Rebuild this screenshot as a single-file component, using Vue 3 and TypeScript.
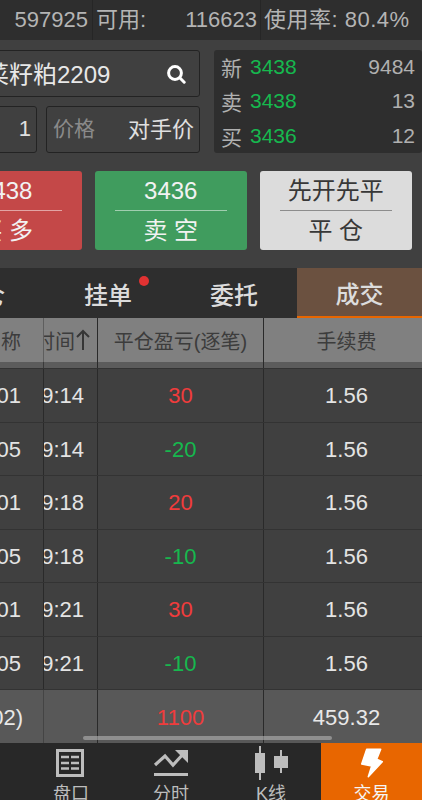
<script setup lang="ts">
type Trade = { name: string; time: string; pl: number }

const trades: Trade[] = [
  { name: '01', time: '9:14', pl: 30 },
  { name: '05', time: '9:14', pl: -20 },
  { name: '01', time: '9:18', pl: 20 },
  { name: '05', time: '9:18', pl: -10 },
  { name: '01', time: '9:21', pl: 30 },
  { name: '05', time: '9:21', pl: -10 },
]

const quotes = [
  { label: '新', price: 3438, vol: 9484 },
  { label: '卖', price: 3438, vol: 13 },
  { label: '买', price: 3436, vol: 12 },
]
</script>

<template>
  <div class="page">
    <div class="summary">
      <div class="sum-cell sum-first">597925</div>
      <div class="sum-cell sum-second">
        <span>可用:</span>
        <span>116623</span>
      </div>
      <div class="sum-cell sum-third">使用率: 80.4%</div>
    </div>

    <div class="order">
      <div class="form">
        <div class="box search">
          <span class="contract">菜籽粕2209</span>
          <svg class="search-icon" width="20" height="20" viewBox="0 0 20 20">
            <circle cx="9" cy="9" r="6.4" fill="none" stroke="#fff" stroke-width="3" />
            <path d="M14 14 L18.2 18.2" stroke="#fff" stroke-width="3" stroke-linecap="round" />
          </svg>
        </div>
        <div class="form-row">
          <div class="box qty">1</div>
          <div class="box price">
            <span class="price-label">价格</span>
            <span class="price-value">对手价</span>
          </div>
        </div>
      </div>
      <div class="quotes">
        <div v-for="q in quotes" :key="q.label" class="quote">
          <span class="quote-label">{{ q.label }}</span>
          <span class="quote-price">{{ q.price }}</span>
          <span class="quote-vol">{{ q.vol }}</span>
        </div>
      </div>
    </div>

    <div class="actions">
      <div class="action action-buy">
        <div class="action-top">3438</div>
        <div class="action-bottom">买 多</div>
      </div>
      <div class="action action-sell">
        <div class="action-top">3436</div>
        <div class="action-bottom">卖 空</div>
      </div>
      <div class="action action-close">
        <div class="action-top">先开先平</div>
        <div class="action-bottom">平 仓</div>
      </div>
    </div>

    <div class="tabs">
      <div class="tab tab-first"><span>持仓</span></div>
      <div class="tab tab-wide">
        <span class="dot-wrap">挂单<i class="dot"></i></span>
      </div>
      <div class="tab tab-wide">委托</div>
      <div class="tab tab-active">成交</div>
    </div>

    <div class="table">
      <div class="row head">
        <div class="cell col-name">名称</div>
        <div class="cell col-time">
          <span>时间</span>
          <svg class="sort-arrow" width="14" height="22" viewBox="0 0 14 22">
            <path d="M7 21V2M1 8L7 2L13 8" fill="none" stroke="#363636" stroke-width="2" />
          </svg>
        </div>
        <div class="cell col-pl">平仓盈亏(逐笔)</div>
        <div class="cell col-fee">手续费</div>
      </div>
      <div class="head-band">
        <div class="col-name"></div>
        <div class="col-time"></div>
        <div class="col-pl"></div>
        <div class="col-fee"></div>
      </div>
      <div v-for="(t, i) in trades" :key="i" class="row body">
        <div class="cell col-name">{{ t.name }}</div>
        <div class="cell col-time">{{ t.time }}</div>
        <div class="cell col-pl" :class="t.pl > 0 ? 'up' : 'down'">{{ t.pl }}</div>
        <div class="cell col-fee">1.56</div>
      </div>
      <div class="row total">
        <div class="cell col-name">02)</div>
        <div class="cell col-time"></div>
        <div class="cell col-pl up">1100</div>
        <div class="cell col-fee">459.32</div>
      </div>
      <div class="scrollbar"></div>
    </div>

    <div class="nav">
      <div class="nav-item">
        <svg width="36" height="36" viewBox="0 0 36 36">
          <rect x="4.5" y="5.5" width="25" height="25" fill="none" stroke="#bdbdbd" stroke-width="3" />
          <path d="M8 12H16M18 12H26M8 18H16M18 18H26M8 23.5H16M18 23.5H26" stroke="#bdbdbd" stroke-width="2.4" />
        </svg>
        <span>盘口</span>
      </div>
      <div class="nav-item">
        <svg width="36" height="36" viewBox="0 0 36 36">
          <path d="M2 20 L12 11 L20 20 L32 7" fill="none" stroke="#bdbdbd" stroke-width="3.2" />
          <path d="M22 5 H35 V18 Z" fill="#bdbdbd" />
          <rect x="1" y="28" width="34" height="3" fill="#bdbdbd" />
        </svg>
        <span>分时</span>
      </div>
      <div class="nav-item">
        <svg width="36" height="36" viewBox="0 0 36 36">
          <rect x="2" y="8" width="10" height="20" fill="#bdbdbd" />
          <rect x="6" y="1" width="2" height="34" fill="#bdbdbd" />
          <rect x="21" y="11" width="14" height="12" fill="#bdbdbd" />
          <rect x="27" y="5" width="2" height="23" fill="#bdbdbd" />
        </svg>
        <span>K线</span>
      </div>
      <div class="nav-item nav-active">
        <svg width="36" height="36" viewBox="0 0 36 36">
          <path
            d="M12.7 4.3 H26.7 L22.7 14.3 L28.3 16.7 L14.3 31.7 L17.7 21 L7.7 19 Z"
            fill="#fff"
            stroke="#fff"
            stroke-width="1.5"
            stroke-linejoin="round"
          />
        </svg>
        <span>交易</span>
      </div>
    </div>
  </div>
</template>

<style>
html,
body {
  margin: 0;
  background: #282828;
}
</style>

<style scoped>
.page {
  width: 422px;
  height: 800px;
  overflow: hidden;
  background: #404040;
  font-family: "Liberation Sans", "Noto Sans CJK SC", sans-serif;
  color: #e0e0e0;
}

.summary {
  display: flex;
  height: 40px;
  background: #2e2e2e;
  color: #b4b4b4;
  font-size: 22px;
  line-height: 40px;
}
.sum-cell {
  box-sizing: border-box;
  white-space: nowrap;
  border-right: 1px solid #262626;
}
.sum-first {
  width: 93px;
  padding-right: 4px;
  text-align: right;
}
.sum-second {
  display: flex;
  justify-content: space-between;
  width: 168px;
  padding: 0 3px;
}
.sum-third {
  flex: 1;
  padding-left: 3px;
  border-right: 0;
  letter-spacing: 0.5px;
}

.order {
  display: flex;
  gap: 14px;
  padding-top: 10px;
}
.form {
  display: flex;
  flex-direction: column;
  gap: 9px;
  width: 200px;
}
.form-row {
  display: flex;
  gap: 9px;
}
.box {
  display: flex;
  align-items: center;
  box-sizing: border-box;
  height: 47px;
  background: #404040;
  border: 1px solid #232323;
  border-radius: 3px;
  white-space: nowrap;
  font-size: 22px;
}
.search {
  justify-content: space-between;
  margin-left: -16px;
  width: 216px;
  padding-right: 13px;
  font-size: 24px;
  color: #e8e8e8;
}
.search-icon {
  flex: none;
  margin-top: 1px;
}
.contract {
  margin-bottom: 3px;
}
.qty {
  justify-content: flex-end;
  margin-left: -10px;
  width: 47px;
  padding-right: 5px;
  padding-bottom: 2px;
}
.price {
  justify-content: space-between;
  flex: 1;
  padding: 0 5px 0 6px;
}
.price-label {
  margin-bottom: 5px;
  font-size: 21px;
  color: #8a8a8a;
}
.price-value {
  margin-bottom: 5px;
}
.quotes {
  display: flex;
  flex-direction: column;
  box-sizing: border-box;
  flex: 1;
  height: 103px;
  padding: 0 7px;
  background: #2e2e2e;
  border-radius: 3px;
  font-size: 21px;
}
.quote {
  display: flex;
  align-items: center;
  flex: 1;
}
.quote-label {
  width: 29px;
  color: #b0b0b0;
}
.quote-price {
  color: #16b84e;
}
.quote-vol {
  margin-left: auto;
  color: #b0b0b0;
}

.actions {
  display: flex;
  gap: 13.5px;
  padding-top: 18px;
  padding-bottom: 18px;
  margin-left: -70px;
}
.action {
  box-sizing: border-box;
  flex: none;
  width: 151.5px;
  height: 79px;
  padding: 0 20px;
  border-radius: 3px;
  text-align: center;
  font-size: 24px;
  color: #f2f2f2;
}
.action-buy {
  background: #c44848;
}
.action-sell {
  background: #409c5e;
}
.action-close {
  background: #dcdcdc;
  color: #383838;
}
.action-top {
  height: 39px;
  line-height: 40px;
  border-bottom: 1px solid rgba(255, 255, 255, 0.5);
}
.action-close .action-top {
  border-bottom-color: #8c8c8c;
}
.action-bottom {
  line-height: 40px;
}

.tabs {
  display: flex;
  height: 50px;
  background: #2e2e2e;
  font-size: 24px;
  font-weight: 500;
  color: #dcdcdc;
}
.tab {
  display: flex;
  align-items: center;
  justify-content: center;
  box-sizing: border-box;
  flex: none;
}
.tab-first {
  justify-content: flex-end;
  width: 45px;
  overflow: hidden;
  white-space: nowrap;
  padding-right: 40px;
}
.tab-wide {
  width: 126px;
}
.dot-wrap {
  position: relative;
}
.dot {
  position: absolute;
  top: 0;
  right: -17px;
  width: 10px;
  height: 10px;
  border-radius: 50%;
  background: #e13232;
}
.tab-active {
  flex: 1;
  background: #6b5140;
  border-bottom: 2px solid #e86600;
}

.table {
  position: relative;
  font-size: 22px;
}
.row,
.head-band {
  display: flex;
}
.cell {
  display: flex;
  align-items: center;
  justify-content: center;
  box-sizing: border-box;
  white-space: nowrap;
  overflow: hidden;
}
.col-name {
  box-sizing: border-box;
  flex: none;
  width: 44px;
  border-right: 1px solid #5e5e5e;
  justify-content: flex-end;
  padding-right: 22px;
}
.col-time {
  box-sizing: border-box;
  flex: none;
  width: 54px;
  border-right: 1px solid #2a2a2a;
  justify-content: flex-end;
  padding-right: 13px;
}
.col-pl {
  box-sizing: border-box;
  flex: none;
  width: 166px;
  border-right: 1px solid #2a2a2a;
}
.col-fee {
  box-sizing: border-box;
  flex: 1;
  padding-left: 7px;
}
.head {
  height: 44px;
  background: #808080;
  color: #3c3c3c;
  font-size: 20px;
}
.head .col-time {
  padding-right: 7px;
}
.sort-arrow {
  flex: none;
  margin-left: 1px;
}
.head-band {
  height: 6px;
  background: #5c5c5c;
}
.head-band .col-name {
  border-right-color: #3a3a3a;
}
.body {
  height: 53.5px;
  border-top: 1px solid #333;
  box-sizing: border-box;
  color: #e4e4e4;
}
.body .col-name {
  border-right-color: #2a2a2a;
}
.body .cell,
.total .cell {
  padding-top: 2px;
}
.up {
  color: #f03c3c;
}
.down {
  color: #16b84e;
}
.total {
  height: 54px;
  background: #585858;
  border-top: 1px solid #333;
  box-sizing: border-box;
  color: #e8e8e8;
}
.total .col-name {
  border-right-color: #444;
  padding-right: 20px;
}
.scrollbar {
  position: absolute;
  left: 83px;
  bottom: 3px;
  width: 249px;
  height: 4px;
  border-radius: 2px;
  background: rgba(190, 190, 190, 0.55);
}

.nav {
  display: flex;
  height: 57px;
  padding-left: 21px;
  background: #282828;
  color: #bdbdbd;
  font-size: 18px;
}
.nav-item {
  display: flex;
  flex-direction: column;
  align-items: center;
  flex: none;
  width: 100px;
  height: 57px;
  padding-top: 2px;
  box-sizing: border-box;
}
.nav-item span {
  margin-top: 3px;
  line-height: 20px;
}
.nav-item svg {
  flex: none;
}
.nav-active {
  flex: 1;
  background: #e86600;
  color: #f5f5f5;
}
</style>
